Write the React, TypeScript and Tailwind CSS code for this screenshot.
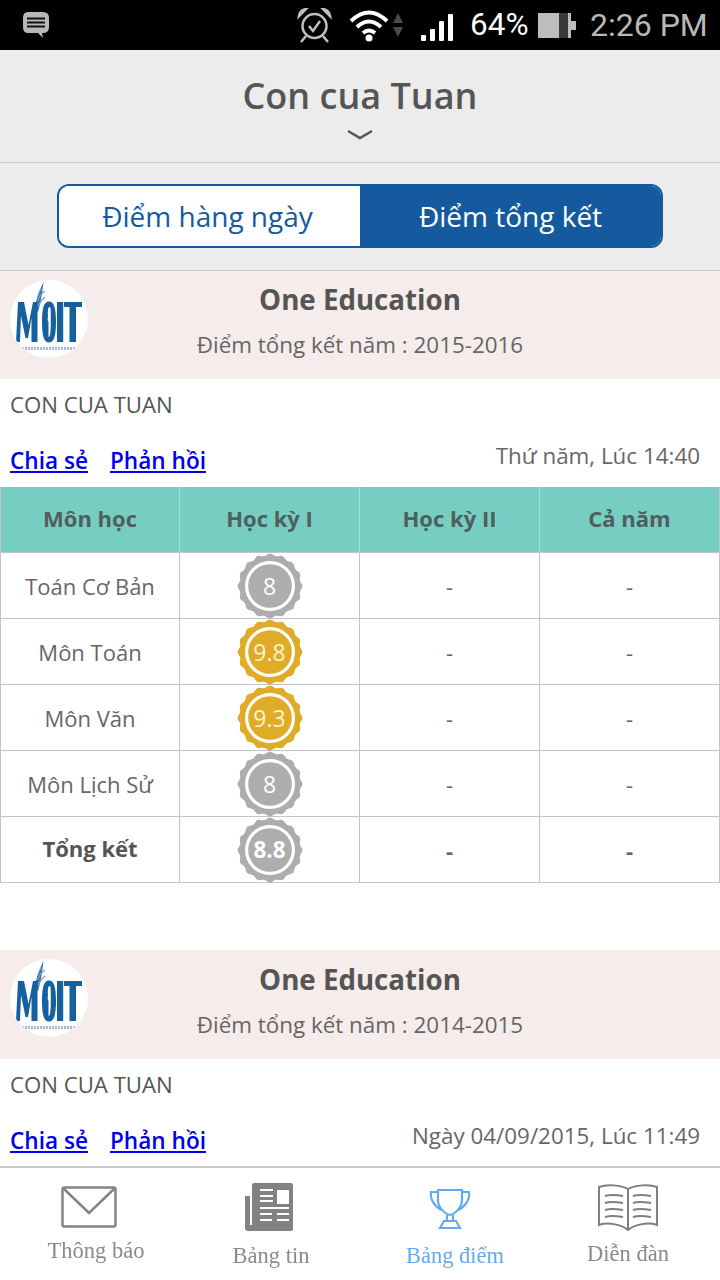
import React from "react";

const sans = "font-['Open_Sans','Noto_Sans',sans-serif]";

function scallopPath(cx: number, cy: number, r: number, amp: number, n: number) {
  const pts: string[] = [];
  const steps = n * 8;
  for (let i = 0; i <= steps; i++) {
    const a = (i / steps) * Math.PI * 2;
    const rr = r + amp * Math.cos(a * n);
    pts.push(`${i === 0 ? "M" : "L"}${(cx + rr * Math.sin(a)).toFixed(2)} ${(cy - rr * Math.cos(a)).toFixed(2)}`);
  }
  return pts.join(" ") + "Z";
}

function Badge({ value, gold, bold }: { value: string; gold?: boolean; bold?: boolean }) {
  const color = gold ? "#e0ac27" : "#adadad";
  return (
    <div className="relative h-[66px] w-[66px] flex items-center justify-center">
      <svg width="66" height="66" viewBox="0 0 66 66" className="absolute left-0 top-0">
        <path d={scallopPath(33, 33, 31.4, 1, 16)} fill={color} />
        <circle cx="33" cy="33" r="23.4" fill={color} stroke="#fff" strokeWidth="3.2" />
      </svg>
      <span className={`relative ${bold ? "font-bold text-[22.5px]" : "text-[23px]"} ${gold ? "text-[#fdf3d0]" : "text-white"}`}>{value}</span>
    </div>
  );
}

function Logo() {
  return (
    <div className="relative h-[78px] w-[78px] rounded-full bg-white shrink-0 overflow-hidden">
      <svg width="78" height="78" viewBox="0 0 78 78" className="absolute inset-0">
        <path d="M25 30 C26 18 30 9 33.5 2 C32.5 10 31.5 20 28 32Z" fill="#2f6ea9" />
        <path d="M28 21 C29 16 32 13 35 11 M28 26 C30 21 33 19 35 17 M28 16 C29 12 31 9 33 8" stroke="#7ba5cc" strokeWidth="1.3" fill="none" />
        <path d="M6 62 L8 22 L14 22 L18.5 45 L23 22 L27.5 22 L27.5 62 L21.5 62 L21.5 38 L18 58 L15.5 58 L11 36 L10 62Z" fill="#15619f" />
        <path fillRule="evenodd" d="M39 21.5 C34 21.5 32 28 32 42 C32 56 34 62.5 39 62.5 C44 62.5 46 56 46 42 C46 28 44 21.5 39 21.5Z M39.5 27 C38 27 37.5 31 38 37 C37.3 39 37.7 41 38.5 42 L38.5 57 C40 57 40.8 53 40.8 42 C40.8 31 41 27 39.5 27Z" fill="#15619f" />
        <rect x="47" y="22" width="6.2" height="40" fill="#15619f" />
        <rect x="54" y="22" width="18" height="5" fill="#15619f" />
        <rect x="59.5" y="22" width="6.5" height="40" fill="#15619f" />
        <path d="M12 68.5 H67" stroke="#7e9dbd" strokeWidth="3" strokeDasharray="2 1" opacity="0.7" />
      </svg>
    </div>
  );
}

const rows = [
  { name: "Toán Cơ Bản", v: "8" },
  { name: "Môn Toán", v: "9.8", gold: true },
  { name: "Môn Văn", v: "9.3", gold: true },
  { name: "Môn Lịch Sử", v: "8" },
  { name: "Tổng kết", v: "8.8", bold: true },
];

const cols = "grid grid-cols-[179px_180px_180px_1fr]";

function CardHead({ year, time, pink, pt }: { year: string; time: string; pink: string; pt: string }) {
  return (
    <>
      <div className={`relative ${pink} bg-[#f5eceb] text-center`}>
        <div className="absolute left-[10px] top-[9px]"><Logo /></div>
        <div className={`${pt} text-[27.7px] leading-[36px] font-bold text-[#555555]`}>One Education</div>
        <div className="mt-[13px] text-[22.4px] leading-[30px] text-[#666666]">Điểm tổng kết năm : {year}</div>
      </div>
      <div className="h-[108px] px-[10px] bg-white">
        <div className="pt-[11px] text-[22.2px] leading-[30px] text-[#555555]">CON CUA TUAN</div>
        <div className="mt-[24px] flex justify-between items-start pr-[10px]">
          <div className="flex gap-[22px] pt-[2px] text-[22.6px] leading-[30px] font-semibold text-[#0000ee] underline">
            <span>Chia sẻ</span>
            <span>Phản hồi</span>
          </div>
          <div className="text-[22.4px] leading-[30px] text-[#666666] -mt-[3px]">{time}</div>
        </div>
      </div>
    </>
  );
}

function Table() {
  const headers = ["Môn học", "Học kỳ I", "Học kỳ II", "Cả năm"];
  return (
    <div className="border-x border-b border-[#c4c4c4] bg-white">
      <div className={`${cols} h-[65px] bg-[#76cdc2] text-[22px] font-bold text-[#4f5f5d]`}>
        {headers.map((h, i) => (
          <div key={h} className={`flex items-center justify-center pb-[2px] ${i < 3 ? "border-r border-[#a5dcd5]" : ""}`}>{h}</div>
        ))}
      </div>
      {rows.map((r) => (
        <div key={r.name} className={`${cols} h-[66px] border-t border-[#c4c4c4] text-[22px] text-[#666666]`}>
          <div className={`flex items-center justify-center border-r border-[#c4c4c4] ${r.bold ? "font-bold text-[#555555] pb-[3px]" : ""}`}>{r.name}</div>
          <div className="flex items-center justify-center border-r border-[#c4c4c4]"><Badge value={r.v} gold={r.gold} bold={r.bold} /></div>
          <div className={`flex items-center justify-center border-r border-[#c4c4c4] ${r.bold ? "font-bold" : ""}`}>-</div>
          <div className={`flex items-center justify-center ${r.bold ? "font-bold" : ""}`}>-</div>
        </div>
      ))}
    </div>
  );
}

function StatusBar() {
  return (
    <div className="h-[50px] bg-black flex items-center relative shrink-0 font-['Roboto',sans-serif]">
      <svg width="30" height="30" viewBox="0 0 30 30" className="absolute left-[21px] top-[10px]">
        <path d="M7 2 H22 Q28 2 28 8 V17 Q28 23 22 23 H21 L22 28 L17 23 H7 Q2 23 2 17 V8 Q2 2 7 2Z" fill="#b8b8b8" />
        <path d="M6 8.5H24M6 12.5H24M6 16.5H24" stroke="#111" strokeWidth="2" />
      </svg>
      <svg width="36" height="36" viewBox="0 0 36 36" className="absolute left-[297px] top-[8px]" fill="none" stroke="#c0c0c0">
        <circle cx="17.5" cy="18" r="12" strokeWidth="2.5" />
        <path d="M12 18 L16 23 L23 13" strokeWidth="2.5" />
        <path d="M2 8 Q3 2 9 1 L2 8Z M33 8 Q32 2 26 1 L33 8Z" strokeWidth="2.5" fill="#c0c0c0" />
        <path d="M9 28 L4 34 M26 28 L31 34" strokeWidth="2.5" />
      </svg>
      <svg width="42" height="36" viewBox="0 0 42 36" className="absolute left-[349px] top-[8px]" fill="none" stroke="#fff" strokeWidth="4">
        <path d="M2 13 Q20 -4 38 13" />
        <path d="M8 19 Q20 8 32 19" />
        <path d="M14 25 Q20 20 26 25" />
        <circle cx="20" cy="30" r="3.5" fill="#fff" stroke="none" />
      </svg>
      <svg width="12" height="28" viewBox="0 0 12 28" className="absolute left-[392px] top-[12px]">
        <path d="M6 1 L11 11 H1Z M6 25 L11 15 H1Z" fill="#4a4a4a" />
      </svg>
      <div className="absolute left-[421px] top-[13px] flex items-end gap-[4px] h-[28px]">
        <span className="w-[5px] h-[6px] bg-white rounded-[1px]" />
        <span className="w-[5px] h-[12px] bg-white rounded-[1px]" />
        <span className="w-[5px] h-[20px] bg-white rounded-[1px]" />
        <span className="w-[5px] h-[27px] bg-white rounded-[1px]" />
      </div>
      <span className="absolute left-[470px] top-[6px] text-[31.5px] leading-[38px] text-white">64%</span>
      <div className="absolute left-[538px] top-[13px] w-[33px] h-[25px] bg-[#bdbdbd] flex justify-end pr-[3px]">
        <span className="w-[9px] h-full bg-[#3a3a3a]" />
      </div>
      <span className="absolute left-[571px] top-[21px] w-[5px] h-[9px] bg-[#bdbdbd]" />
      <span className="absolute left-[590px] top-[6px] text-[32px] leading-[38px] text-[#b8b8b8]">2:26 PM</span>
    </div>
  );
}

function NavItem({ label, active, mt, children, w }: { label: string; active?: boolean; mt: string; children: React.ReactNode; w: string }) {
  return (
    <div className={`flex flex-col items-center ${w}`}>
      <div className="h-[60px] flex items-end justify-center">{children}</div>
      <span className={`${mt} font-['Liberation_Serif',serif] text-[22.5px] leading-[26px] blur-[0.4px] ${active ? "text-[#62a9ee]" : "text-[#8a8a8a]"}`}>{label}</span>
    </div>
  );
}

function BottomNav() {
  return (
    <div className="h-[114px] shrink-0 border-t-2 border-[#c9c9c9] bg-white flex pt-0">
      <NavItem label="Thông báo" mt="mt-[10px]" w="w-[192px]">
        <svg width="56" height="42" viewBox="0 0 56 42" fill="none" stroke="#848484" strokeWidth="2.5" className="mr-[14px]">
          <rect x="1.5" y="1.5" width="53" height="39" rx="2" />
          <path d="M2 2 L28 27 L54 2" />
        </svg>
      </NavItem>
      <NavItem label="Bảng tin" mt="mt-[15px]" w="w-[158px]">
        <svg width="50" height="50" viewBox="0 0 50 50" className="mr-[5px] mb-[-5px]">
          <path d="M8 2 Q8 0 10 0 H47 Q49 0 49 2 V46 Q49 48 47 48 H4 Q1 48 1 45 V13 H6 V42 H8Z" fill="#828282" />
          <rect x="33" y="7" width="12" height="14" fill="#fff" />
          <path d="M16 7H29M16 13H29M16 18H29M16 25H45M16 31H28M33 31H45M16 37H28M33 37H45" stroke="#fff" strokeWidth="2" />
        </svg>
      </NavItem>
      <NavItem label="Bảng điểm" active mt="mt-[15px]" w="w-[210px]">
        <svg width="42" height="42" viewBox="0 0 42 42" fill="none" stroke="#62a9ee" strokeWidth="2.2" className="mr-[10px] mb-[-2px]">
          <path d="M9 2 H33 V12 C33 20 26 26 21 27 C16 26 9 20 9 12Z" />
          <path d="M9 4 H2 C1 12 6 19 13 22 M33 4 H40 C41 12 36 19 29 22" />
          <path d="M18 27 V33 M24 27 V33 M15 33 H27 L31 40 H11Z" />
        </svg>
      </NavItem>
      <NavItem label="Diễn đàn" mt="mt-[13px]" w="w-[136px]">
        <svg width="62" height="48" viewBox="0 0 62 48" fill="none" stroke="#7f7f7f" strokeWidth="2" className="mb-[-4px]">
          <path d="M31 5 C24 1 10 0 2 3 V41 C10 38 24 40 31 46 C38 40 52 38 60 41 V3 C52 0 38 1 31 5 V46" />
          <path d="M8 12 C14 10 20 11 26 12M8 19 C14 17 20 18 26 19M8 26 C14 24 20 25 26 26M8 33 C14 31 20 32 26 33M36 12 C42 10 48 11 54 12M36 19 C42 17 48 18 54 19M36 26 C42 24 48 25 54 26M36 33 C42 31 48 32 54 33" />
        </svg>
      </NavItem>
    </div>
  );
}

export default function App() {
  return (
    <div className={`h-[1280px] w-[720px] flex flex-col overflow-hidden bg-white ${sans}`}>
      <StatusBar />
      <div className="flex-1 overflow-hidden">
        <div className="h-[113px] bg-[#ececec] border-b border-[#c9c9c9] text-center">
          <div className="pt-[23px] text-[36px] leading-[46px] font-semibold text-[#555555]">Con cua Tuan</div>
          <div className="flex justify-center mt-[10px]">
            <svg width="28" height="12" viewBox="0 0 28 12" fill="none" stroke="#555" strokeWidth="2.4"><path d="M2 2 L14 9 L26 2" /></svg>
          </div>
        </div>
        <div className="h-[108px] bg-[#ececec] border-b border-[#c9c9c9] pt-[21px] flex justify-center">
          <div className="h-[64px] w-[606px] flex rounded-[12px] overflow-hidden border-2 border-[#155a9e] text-[28px]">
            <div className="w-1/2 shrink-0 bg-white text-[#155a9e] flex items-center justify-center pr-[4px]">Điểm hàng ngày</div>
            <div className="w-1/2 shrink-0 bg-[#155a9e] text-white flex items-center justify-center">Điểm tổng kết</div>
          </div>
        </div>
        <CardHead year="2015-2016" time="Thứ năm, Lúc 14:40" pink="h-[108px]" pt="pt-[10px]" />
        <Table />
        <div className="h-[67px] bg-white" />
        <CardHead year="2014-2015" time="Ngày 04/09/2015, Lúc 11:49" pink="h-[109px]" pt="pt-[11px]" />
      </div>
      <BottomNav />
    </div>
  );
}
